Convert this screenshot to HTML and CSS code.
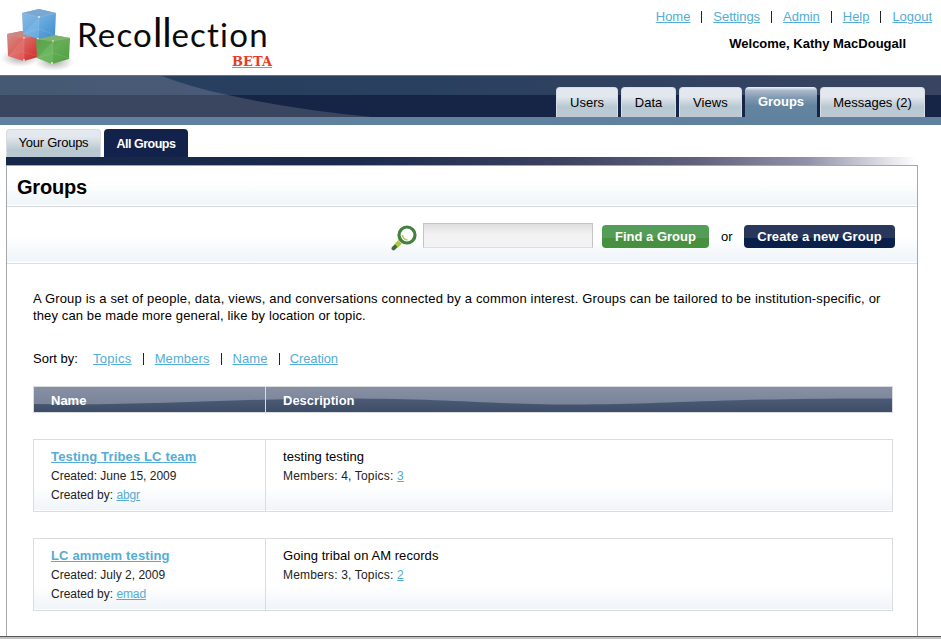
FILE: index.html
```html
<!DOCTYPE html>
<html lang="en">
<head>
<meta charset="utf-8">
<title>Recollection - Groups</title>
<link rel="stylesheet" href="styles.css">
</head>
<body>
<header class="header">
  <a class="brand">
    <svg class="cubes" width="74" height="72" viewBox="0 0 74 72">
      <defs>
        <linearGradient id="bf" x1="0" y1="0" x2="1" y2="1"><stop offset="0" stop-color="#8dbbe4"/><stop offset=".5" stop-color="#68a9de"/><stop offset="1" stop-color="#3c8bcc"/></linearGradient>
        <linearGradient id="rf" x1="0" y1="0" x2="1" y2="1"><stop offset="0" stop-color="#d0938f"/><stop offset=".5" stop-color="#db5d59"/><stop offset="1" stop-color="#cf2626"/></linearGradient>
        <linearGradient id="gf" x1="0" y1="0" x2="1" y2="1"><stop offset="0" stop-color="#58a048"/><stop offset=".5" stop-color="#64ad55"/><stop offset="1" stop-color="#4f9e40"/></linearGradient>
        <radialGradient id="sh"><stop offset="0" stop-color="#777" stop-opacity=".65"/><stop offset="1" stop-color="#999" stop-opacity="0"/></radialGradient>
      </defs>
      <ellipse cx="20" cy="58" rx="20" ry="9" fill="url(#sh)"/>
      <ellipse cx="54" cy="62" rx="20" ry="9" fill="url(#sh)"/>
      <path d="M7 34 22 31 39 35 38 57 24 61 8 56Z" fill="url(#rf)"/>
      <path d="M7 34 24 38 39 35 22 31Z" fill="#c98782"/>
      <path d="M8 56 24 38v23Z" fill="#e98a86" opacity=".35"/>
      <path d="M7 34 24 38 39 35M24 38v23M8 56 21 51 37 56" fill="none" stroke="#f0aaa5" stroke-opacity=".3" stroke-width=".6"/>
      <path d="M36 39 53 35 70 38 69 59 52 64 37 58Z" fill="url(#gf)"/>
      <path d="M36 39 53 41 70 38 53 35Z" fill="#80b172"/>
      <path d="M37 58 53 41 52 64Z" fill="#83c574" opacity=".4"/>
      <path d="M36 39 53 41 70 38M53 41 52 64M37 58 53 53 69 58" fill="none" stroke="#b6ddb0" stroke-opacity=".3" stroke-width=".6"/>
      <path d="M22 13 39 9 56 13 55 35 38 39 23 34Z" fill="url(#bf)"/>
      <path d="M22 13 39 17 56 13 39 9Z" fill="#79a9d3"/>
      <path d="M23 34 39 17 38 39Z" fill="#9bd0f5" opacity=".25"/>
      <path d="M22 13 39 17 56 13M39 17 38 39M23 34 39 29 55 35" fill="none" stroke="#c1e0fa" stroke-opacity=".3" stroke-width=".6"/>
      <circle cx="39" cy="17" r=".9" fill="#e4f4ff"/><circle cx="38" cy="38.500" r=".8" fill="#e4f4ff"/><circle cx="24" cy="38" r=".8" fill="#ffe5e5"/><circle cx="24" cy="60" r=".9" fill="#ffe5e5"/><circle cx="53" cy="41" r=".8" fill="#efffed"/><circle cx="52" cy="63" r=".9" fill="#efffed"/>
    </svg>
    <span class="brand-text"><span class="wordmark">Reco<span class="tall">ll</span>ection</span><span class="beta">BETA</span></span>
  </a>
  <div class="account">
    <nav class="links util"><a>Home</a><i></i><a>Settings</a><i></i><a>Admin</a><i></i><a>Help</a><i></i><a>Logout</a></nav>
    <p class="welcome">Welcome, Kathy MacDougall</p>
  </div>
</header>
<nav class="mainnav">
  <svg class="swoosh" width="400" height="42" viewBox="0 0 400 42">
    <defs><linearGradient id="sw" x1="0" x2="1" y1="0" y2="0"><stop offset="0" stop-color="#455972"/><stop offset="1" stop-color="#4a5a78"/></linearGradient></defs>
    <path d="M0 1H162Q190 12 228 20H0Z" fill="url(#sw)"/>
    <path d="M0 20H228Q290 34 372 42H0Z" fill="#3a4660"/>
  </svg>
  <a class="tab users">Users</a><a class="tab data">Data</a><a class="tab views">Views</a><a class="tab groups active">Groups</a><a class="tab messages">Messages (2)</a>
</nav>
<nav class="subnav"><a class="sub your">Your Groups</a><a class="sub all">All Groups</a></nav>
<div class="bar"></div>
<main class="panel">
  <h1 class="title">Groups</h1>
  <form class="search">
    <svg class="glass" width="26" height="26" viewBox="0 0 26 26">
      <path d="M10.500 15.500 4.500 21.500" stroke="#a9c748" stroke-width="5"/>
      <path d="M4 21.800 2.500 23.300" stroke="#3c6f39" stroke-width="4" stroke-linecap="round"/>
      <path d="M7.800 15.600 10.400 18.200" stroke="#e5eebe" stroke-width="1"/>
      <circle cx="16" cy="10" r="8" fill="#fff" stroke="#44813f" stroke-width="3.200"/>
      <path d="M11.500 10a5 5 0 0 0 5 4.800" fill="none" stroke="#b4cf50" stroke-width="1.800"/>
    </svg>
    <input class="field" type="text" aria-label="Find a Group">
    <button class="btn find" type="button">Find a Group</button>
    <span class="or">or</span>
    <button class="btn create" type="button">Create a new Group</button>
  </form>
  <div class="content">
    <p class="intro"><span class="l1">A Group is a set of people, data, views, and conversations connected by a common interest. Groups can be tailored to be institution-specific, or</span><br><span class="l2">they can be made more general, like by location or topic.</span></p>
    <div class="links sort"><span class="label">Sort by:</span><a class="wide">Topics</a><i></i><a>Members</a><i></i><a>Name</a><i></i><a>Creation</a></div>
    <div class="row head">
      <svg class="wave" width="858" height="25" viewBox="0 0 858 25" preserveAspectRatio="none">
        <defs><linearGradient id="wv" x1="0" x2="0" y1="0" y2="1"><stop offset="0" stop-color="#4c5c77"/><stop offset="1" stop-color="#3d4c67"/></linearGradient></defs>
        <path d="M0 17C110 19 190 12 300 11.500C410 11 450 17.500 550 17.500C640 17 690 11 858 11.500V25H0Z" fill="url(#wv)"/>
      </svg>
      <b class="c1">Name</b><b class="c2">Description</b>
    </div>
    <div class="row item">
      <div class="c1"><a class="name">Testing Tribes LC team</a><p class="meta">Created: June 15, 2009</p><p class="meta">Created by: <a>abgr</a></p></div>
      <div class="c2"><p class="desc">testing testing</p><p class="meta">Members: 4, Topics: <a>3</a></p></div>
    </div>
    <div class="row item">
      <div class="c1"><a class="name">LC ammem testing</a><p class="meta">Created: July 2, 2009</p><p class="meta">Created by: <a>emad</a></p></div>
      <div class="c2"><p class="desc">Going tribal on AM records</p><p class="meta">Members: 3, Topics: <a>2</a></p></div>
    </div>
  </div>
</main>
<footer class="edge"></footer>
</body>
</html>
```

FILE: styles.css
```css
* { box-sizing: border-box; }
body { margin: 0; height: 639px; overflow: hidden; background: #fff; color: #000; font: 13px/17px "Liberation Sans", Arial, sans-serif; display: flex; flex-direction: column; }
p, h1 { margin: 0; }
a { color: #54add4; text-decoration: underline; }
.header { height: 75px; flex: none; display: flex; justify-content: space-between; }
.brand { display: flex; text-decoration: none; }
.cubes { flex: none; }
.brand-text { display: flex; flex-direction: column; width: 198px; padding: 11px 0 0 3px; }
.wordmark { height: 44px; color: #0b0b0b; font: 33px/46px Lato, sans-serif; letter-spacing: 1.2px; white-space: nowrap; }
.tall { font-size: 40px; line-height: 1px; letter-spacing: -.2px; }
.beta { align-self: flex-end; color: #e83a25; font: bold 13px/13px "DejaVu Serif", serif; border-bottom: 1px solid #54add4; height: 13px; }
.account { width: 290px; padding: 8px 9px 0 0; display: flex; flex-direction: column; align-items: flex-end; }
.links { display: flex; align-items: center; white-space: nowrap; }
.links i { width: 1px; height: 12px; background: #222; margin: 0 11px; }
.util { letter-spacing: -.03px; }
.welcome { font-weight: bold; padding: 10px 26px 0 0; white-space: nowrap; }
.mainnav { position: relative; flex: none; height: 50px; display: flex; justify-content: flex-end; align-items: flex-start; gap: 3px; padding: 11px 16px 0 0; border-top: 1px solid #647386; border-bottom: 8px solid #61829f; background: linear-gradient(90deg, #263d5d, #2a405f 45%, #394461) top / 100% 19px no-repeat, #162545; }
.swoosh { position: absolute; left: 0; top: -1px; }
.tab { height: 30px; color: #000; text-decoration: none; text-align: center; line-height: 30px; border-radius: 4px 4px 0 0; border: 1px solid #d8dde3; border-bottom: 0; background: linear-gradient(#e3e7ee 30%, #c9d4dc 52%, #b8c8d2 65%, #becad5); white-space: nowrap; }
.users { width: 62px; } .data { width: 55px; } .views { width: 63px; } .groups { width: 72px; } .messages { width: 105px; }
.views { letter-spacing: .1px; }
.tab.active { color: #fff; font-weight: bold; line-height: 30px; background: linear-gradient(#f0f3f6 0, #a9b8c9 12%, #829bb3 35%, #6485a0 62%, #61829f); border: 0; }
.subnav { flex: none; height: 32px; display: flex; align-items: flex-end; gap: 3px; padding-left: 6px; }
.sub { height: 28px; border-radius: 4px 4px 0 0; text-decoration: none; text-align: center; white-space: nowrap; line-height: 28px; }
.your { width: 95px; color: #000; border: 1px solid #d8dde0; border-bottom: 0; background: linear-gradient(#e3e7ee 25%, #cad4da 55%, #b8c8d1 75%, #bbc8d3); line-height: 26px; letter-spacing: -.25px; }
.all { width: 84px; color: #fff; background: #13224a; font-weight: bold; font-size: 12.5px; letter-spacing: -.5px; line-height: 30px; }
.bar { flex: none; height: 8px; margin-left: 6px; width: 911px; background: linear-gradient(90deg, #162749, #1b2a4c 38%, #3a4060 60%, #62627d 76%, #9191a9 88%, #fff); }
.panel { flex: none; width: 912px; height: 471px; margin-left: 6px; border: 1px solid #a5a8ab; border-bottom: 0; }
.title { height: 41px; padding: 0 10px; font-size: 20px; line-height: 42px; letter-spacing: -.2px; border-bottom: 1px solid #d4d6d9; background: linear-gradient(#fff 40%, #eff5f9 96%, #fff 97%); }
.search { margin: 0; height: 57px; display: flex; align-items: center; border-bottom: 1px solid #dcdfe1; background: linear-gradient(#fff 50%, #eff5fa 97%, #fff 98%); padding: 2px 0 0 384px; }
.glass { margin: 4px 6px 0 0; }
.field { width: 170px; height: 25px; padding: 2px 4px; border: 1px solid #c4c4c4; border-bottom-color: #ddd; background: linear-gradient(#dedede, #f2f2f2 45%); margin-bottom: 1px; }
.btn { height: 23px; padding: 0; border: 0; border-radius: 4px; color: #fff; font: bold 13px/23px "Liberation Sans", Arial, sans-serif; white-space: nowrap; margin-top: 1px; }
.find { width: 107px; margin-left: 9px; background: linear-gradient(#539d58 57%, #46903f 57%); }
.or { margin: 1px 11px 0 12px; width: 12px; }
.create { width: 151px; letter-spacing: .1px; background: linear-gradient(#29375c 57%, #08204a 57%); }
.content { padding: 26px 24px 0 26px; }
.intro { white-space: nowrap; }
.l1 { letter-spacing: .175px; }
.l2 { letter-spacing: .12px; }
.sort { margin-top: 26px; }
.sort a { letter-spacing: .1px; }
.sort .wide { letter-spacing: .3px; }
.sort a:last-child { letter-spacing: -.1px; margin-left: -1px; }
.label { width: 60px; }
.row { width: 860px; display: grid; grid-template-columns: 232px 1fr; border: 1px solid #dadddf; }
.head { position: relative; height: 27px; margin-top: 19px; background: linear-gradient(#878fa2, #748096); color: #fff; line-height: 27px; }
.wave { position: absolute; left: 0; top: 0; }
.head b { position: relative; }
.c1 { padding-left: 17px; border-right: 1px solid #dadddf; }
.c2 { padding-left: 17px; }
.item { height: 73px; margin-top: 26px; background: linear-gradient(#fff 65%, #f0f5f9 98%, #fff 98%); }
.item > div { padding-top: 8px; }
.name { display: block; width: max-content; font-weight: bold; letter-spacing: .15px; }
.desc { letter-spacing: .06px; }
.meta { font-size: 12px; line-height: 19px; color: #222; white-space: nowrap; }
.c1 .meta a { letter-spacing: -.1px; }
.c2 .meta { letter-spacing: .17px; }
.name + .meta, .desc + .meta { margin-top: 2px; }
.edge { flex: none; height: 3px; border-top: 1px solid #555; background: #c2c2c2; }
```
